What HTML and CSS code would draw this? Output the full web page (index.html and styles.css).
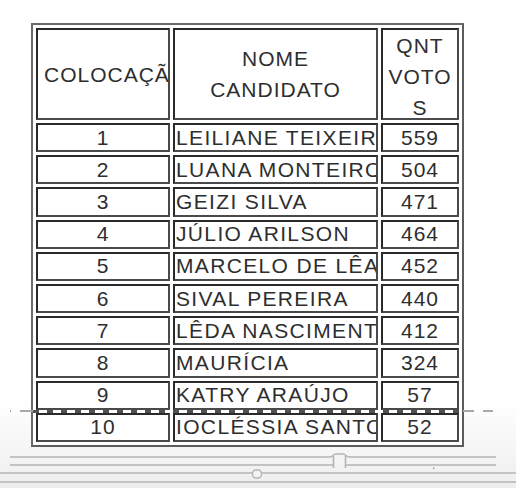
FILE: index.html
```html
<!DOCTYPE html>
<html lang="pt">
<head>
<meta charset="utf-8">
<title>Colocação</title>
<link rel="stylesheet" href="styles.css">
</head>
<body>
<div class="page">
  <div class="doc">
    <table class="rank">
      <colgroup><col class="c-pos"><col class="c-name"><col class="c-votes"></colgroup>
      <thead>
        <tr>
          <th><div class="hcell h-pos">COLOCAÇÃO</div></th>
          <th><div class="hcell h-name">NOME<br>CANDIDATO</div></th>
          <th><div class="hcell h-votes">QNT<br>VOTO<br>S</div></th>
        </tr>
      </thead>
      <tbody>
        <tr><td class="pos">1</td><td class="name"><div class="clip">LEILIANE TEIXEIRA</div></td><td class="votes">559</td></tr>
        <tr><td class="pos">2</td><td class="name"><div class="clip">LUANA MONTEIRO</div></td><td class="votes">504</td></tr>
        <tr><td class="pos">3</td><td class="name"><div class="clip">GEIZI SILVA</div></td><td class="votes">471</td></tr>
        <tr><td class="pos">4</td><td class="name"><div class="clip">JÚLIO ARILSON</div></td><td class="votes">464</td></tr>
        <tr><td class="pos">5</td><td class="name"><div class="clip">MARCELO DE LÊA</div></td><td class="votes">452</td></tr>
        <tr><td class="pos">6</td><td class="name"><div class="clip">SIVAL PEREIRA</div></td><td class="votes">440</td></tr>
        <tr><td class="pos">7</td><td class="name"><div class="clip">LÊDA NASCIMENTO</div></td><td class="votes">412</td></tr>
        <tr><td class="pos">8</td><td class="name"><div class="clip">MAURÍCIA</div></td><td class="votes">324</td></tr>
        <tr><td class="pos">9</td><td class="name"><div class="clip">KATRY ARAÚJO</div></td><td class="votes">57</td></tr>
        <tr><td class="pos">10</td><td class="name"><div class="clip">IOCLÉSSIA SANTOS</div></td><td class="votes">52</td></tr>
      </tbody>
    </table>
  </div>
  <svg class="rulers" width="516" height="41" viewBox="0 0 516 41" aria-hidden="true">
    <g fill="none" stroke="#b4b4b4" stroke-width="1.6">
      <path d="M10 12 H330 C333 12 333 9 336 9 H343 C346 9 346 12 349 12 H496"/>
      <path d="M10 20 H333.5 M345.5 20 H496"/>
      <path d="M333.5 11 V23 M345.5 11 V23"/>
      <path d="M0 28 H516"/>
      <path d="M0 37 H516"/>
    </g>
    <rect x="252.5" y="25" width="9" height="8" rx="3.5" fill="#f3f3f3" stroke="#b4b4b4" stroke-width="1.4"/>
    <rect x="433" y="22.5" width="1.5" height="1.5" fill="#9a9a9a"/>
  </svg>
  <div class="break-line"></div>
  <div class="break-line inner"></div>
</div>
</body>
</html>
```

FILE: styles.css
```css
* { box-sizing: border-box; }

html, body {
  margin: 0;
  padding: 0;
}

body {
  width: 516px;
  height: 488px;
  overflow: hidden;
  background: linear-gradient(to bottom, #ffffff 0, #ffffff 400px, #eeeeee 488px);
  font-family: "Liberation Sans", Arial, sans-serif;
  color: #2e2e2e;
}

.page {
  position: relative;
  width: 516px;
  height: 488px;
  display: flex;
  flex-direction: column;
}

.doc {
  padding: 23px 0 0 31px;
}

.rank {
  border-collapse: separate;
  border-spacing: 3px;
  table-layout: fixed;
  width: 433px;
  background: #ffffff;
  border: 2px solid #5c5c5c;
  border-top-color: #6a6a6a;
  border-left-color: #6a6a6a;
}

.c-pos { width: 134px; }
.c-name { width: 205px; }
.c-votes { width: 78px; }

.rank th,
.rank td {
  padding: 0;
  border: 2px solid #2a2a2a;
  border-right-color: #4a4a4a;
  border-bottom-color: #4a4a4a;
  font-size: 21px;
  font-weight: normal;
  letter-spacing: 1px;
  white-space: nowrap;
  overflow: hidden;
  background: #ffffff;
}

.rank th {
  height: 92px;
  vertical-align: top;
}

.hcell {
  height: 88px;
  overflow: hidden;
  display: flex;
  flex-direction: column;
  justify-content: center;
  line-height: 31px;
}

.h-pos {
  text-align: left;
  padding-left: 6px;
}

.h-name {
  text-align: center;
}

.h-votes {
  text-align: center;
  justify-content: flex-start;
}

.rank td {
  height: 29.2px;
  line-height: 24px;
  vertical-align: middle;
}

.pos,
.votes {
  text-align: center;
}

.rank td.name {
  letter-spacing: 1.35px;
}

.clip {
  overflow: hidden;
  white-space: nowrap;
  padding-left: 1px;
}

.rulers {
  display: block;
  margin-top: -2px;
  flex: none;
}

.break-line {
  position: absolute;
  left: 10px;
  top: 410px;
  width: 483px;
  height: 2px;
  background: repeating-linear-gradient(90deg, #a9a9a9 0 11px, transparent 11px 20px);
  background-position: 13px 0;
}

.break-line.inner {
  left: 33px;
  width: 428px;
  height: 3px;
  background: repeating-linear-gradient(90deg, #505050 0 6px, #ffffff 6px 14px);
  background-position: 0 0;
}
```
